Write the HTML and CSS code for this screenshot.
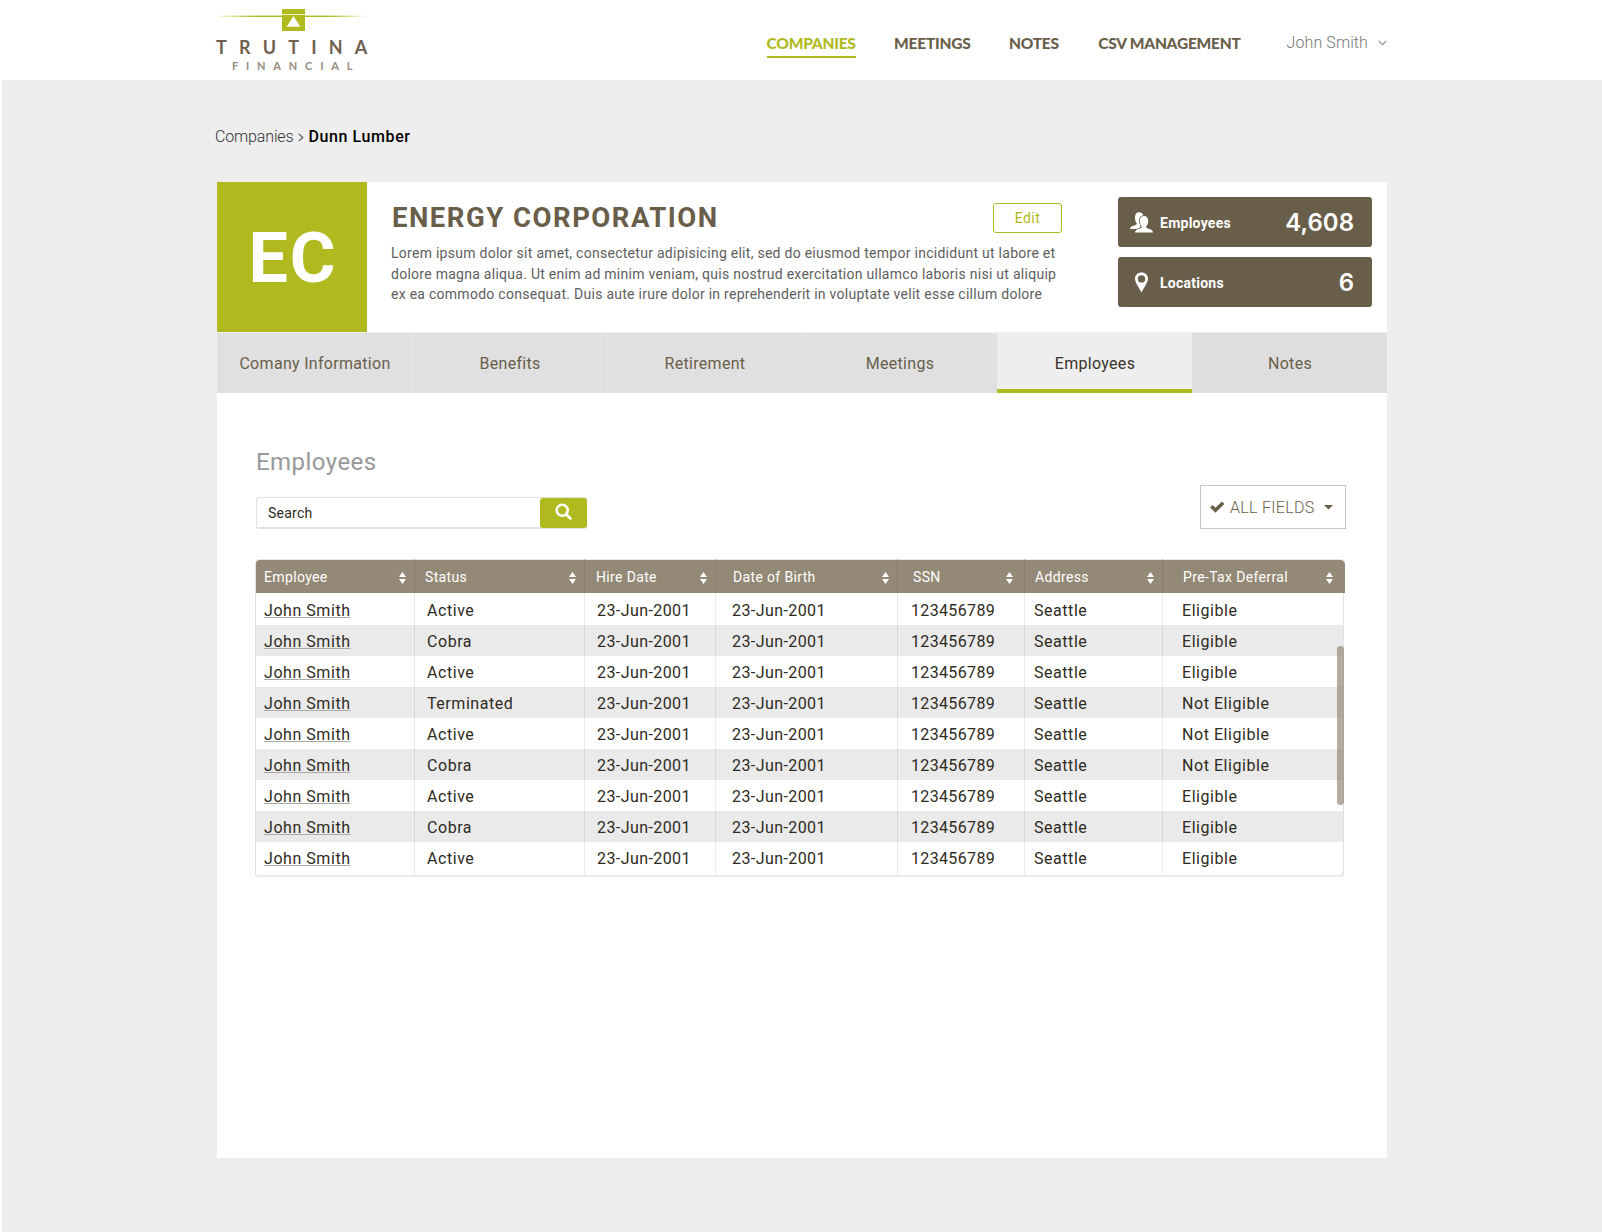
FILE: index.html
```html
<!DOCTYPE html>
<html lang="en">
<head>
<meta charset="utf-8">
<title>Energy Corporation – Employees</title>
<link rel="stylesheet" href="styles.css">
</head>
<body>
<svg class="defs" width="0" height="0">
  <symbol id="sort" viewBox="0 0 7 12"><path d="M3.5 0 7 5H0zM0 7h7L3.5 12z" fill="#fff"/></symbol>
</svg>
<header class="topbar">
  <div class="brand">
    <svg class="brand-mark" width="152" height="32" viewBox="0 0 152 32">
      <defs>
        <linearGradient id="beam" x1="0" x2="1" y1="0" y2="0">
          <stop offset="0" stop-color="#b0ba1e" stop-opacity="0.1"/>
          <stop offset="0.25" stop-color="#b0ba1e"/>
          <stop offset="0.75" stop-color="#b0ba1e"/>
          <stop offset="1" stop-color="#b0ba1e" stop-opacity="0"/>
        </linearGradient>
      </defs>
      <rect x="3" y="15.6" width="149" height="1.4" fill="url(#beam)"/>
      <rect x="67" y="9" width="23" height="22" fill="#b0ba1e"/>
      <rect x="67" y="14" width="23" height="1" fill="#fff" fill-opacity="0.75"/>
      <path d="M78.5 16 85.3 26.7H71.7z" fill="#fff"/>
    </svg>
    <div class="brand-name">TRUTINA</div>
    <div class="brand-sub">FINANCIAL</div>
  </div>
  <nav class="nav">
    <a class="nav-link is-active">COMPANIES</a>
    <a class="nav-link">MEETINGS</a>
    <a class="nav-link">NOTES</a>
    <a class="nav-link">CSV MANAGEMENT</a>
    <div class="user">John Smith
      <svg width="9" height="6" viewBox="0 0 9 6"><path d="M0.8 0.8 4.5 4.6 8.2 0.8" fill="none" stroke="#8c8c8c" stroke-width="1.1"/></svg>
    </div>
  </nav>
</header>

<main class="page">
  <div class="crumbs"><span>Companies</span><svg width="6" height="9" viewBox="0 0 6 9"><path d="M0.8 0.8 4.8 4.5 0.8 8.2" fill="none" stroke="#555" stroke-width="1.1"/></svg><b>Dunn Lumber</b></div>

  <section class="card">
    <div class="company">
      <div class="monogram">EC</div>
      <div class="about">
        <div class="about-head">
          <h1>ENERGY CORPORATION</h1>
          <button class="edit">Edit</button>
        </div>
        <p>Lorem ipsum dolor sit amet, consectetur adipisicing elit, sed do eiusmod tempor incididunt ut labore et<br>dolore magna aliqua. Ut enim ad minim veniam, quis nostrud exercitation ullamco laboris nisi ut aliquip<br>ex ea commodo consequat. Duis aute irure dolor in reprehenderit in voluptate velit esse cillum dolore</p>
      </div>
      <div class="stats">
        <div class="stat">
          <svg width="23" height="21" viewBox="0 0 23 21">
            <path d="M9 0.200c2.600 0 4.200 1.500 4.300 3.800L11 12l-1 5H0c0-2.200 1.800-2.600 4.200-3.500 1.800-.6 2.700-1 2.600-2C5.500 10.200 4.900 7.900 5 5 5.100 2 6.400.2 9 .2z" fill="#fff"/>
            <path d="M14 4c2.900 0 4.300 2 4.200 5-.1 2.400-.9 4.200-2 5.400-.1 1.200.4 1.600 2.300 2.300 2.500.8 4.300 1.400 4.500 3.800H5c.1-2.400 1.900-3 4.400-3.800 1.900-.7 2.500-1.100 2.400-2.300-1.200-1.200-2-3-2-5.400C9.700 6 11.100 4 14 4z" fill="#fff" stroke="#695e4a" stroke-width="1.600" paint-order="stroke"/>
          </svg>
          <span class="stat-label">Employees</span><span class="stat-value">4,608</span>
        </div>
        <div class="stat">
          <svg width="23" height="21" viewBox="0 0 23 21">
            <path fill-rule="evenodd" d="M11.500 0.500c3.700 0 6.500 2.700 6.500 6.300 0 3.200-2.800 7-6.500 13.700C7.800 13.800 5 10 5 6.800 5 3.200 7.800.5 11.500.5zm0 2.700a3.700 3.700 0 1 0 0 7.400 3.700 3.700 0 0 0 0-7.400z" fill="#fff"/>
          </svg>
          <span class="stat-label">Locations</span><span class="stat-value">6</span>
        </div>
      </div>
    </div>

    <div class="tabs">
      <a>Comany Information</a><a>Benefits</a><a>Retirement</a><a>Meetings</a><a class="is-active">Employees</a><a>Notes</a>
    </div>

    <div class="content">
      <h2>Employees</h2>
      <div class="tools">
        <div class="search">
          <span>Search</span>
          <button class="go"><svg width="18" height="18" viewBox="0 0 18 18"><circle cx="7.200" cy="7.200" r="5.500" fill="none" stroke="#fff" stroke-width="2.600"/><path d="M11.300 11.300 15.400 15.400" stroke="#fff" stroke-width="2.800" stroke-linecap="round"/></svg></button>
        </div>
        <div class="fields">
          <svg width="15" height="12" viewBox="0 0 15 12"><path d="M1.400 5.300 5.400 9.300 13.200 1.800" fill="none" stroke="#695e4a" stroke-width="3.400"/></svg>
          <span>ALL FIELDS</span>
          <svg width="9" height="5" viewBox="0 0 9 5"><path d="M0 0h9L4.500 4.600z" fill="#695e4a"/></svg>
        </div>
      </div>

      <div class="grid">
        <table>
          <colgroup><col class="c1"><col class="c2"><col class="c3"><col class="c4"><col class="c5"><col class="c6"><col class="c7"></colgroup>
          <thead><tr>
            <th><div>Employee<svg><use href="#sort"/></svg></div></th>
            <th><div>Status<svg><use href="#sort"/></svg></div></th>
            <th><div>Hire Date<svg><use href="#sort"/></svg></div></th>
            <th><div>Date of Birth<svg><use href="#sort"/></svg></div></th>
            <th><div>SSN<svg><use href="#sort"/></svg></div></th>
            <th><div>Address<svg><use href="#sort"/></svg></div></th>
            <th><div>Pre-Tax Deferral<svg><use href="#sort"/></svg></div></th>
          </tr></thead>
          <tbody>
            <tr><td><a>John Smith</a></td><td>Active</td><td>23-Jun-2001</td><td>23-Jun-2001</td><td>123456789</td><td>Seattle</td><td>Eligible</td></tr>
            <tr><td><a>John Smith</a></td><td>Cobra</td><td>23-Jun-2001</td><td>23-Jun-2001</td><td>123456789</td><td>Seattle</td><td>Eligible</td></tr>
            <tr><td><a>John Smith</a></td><td>Active</td><td>23-Jun-2001</td><td>23-Jun-2001</td><td>123456789</td><td>Seattle</td><td>Eligible</td></tr>
            <tr><td><a>John Smith</a></td><td>Terminated</td><td>23-Jun-2001</td><td>23-Jun-2001</td><td>123456789</td><td>Seattle</td><td>Not Eligible</td></tr>
            <tr><td><a>John Smith</a></td><td>Active</td><td>23-Jun-2001</td><td>23-Jun-2001</td><td>123456789</td><td>Seattle</td><td>Not Eligible</td></tr>
            <tr><td><a>John Smith</a></td><td>Cobra</td><td>23-Jun-2001</td><td>23-Jun-2001</td><td>123456789</td><td>Seattle</td><td>Not Eligible</td></tr>
            <tr><td><a>John Smith</a></td><td>Active</td><td>23-Jun-2001</td><td>23-Jun-2001</td><td>123456789</td><td>Seattle</td><td>Eligible</td></tr>
            <tr><td><a>John Smith</a></td><td>Cobra</td><td>23-Jun-2001</td><td>23-Jun-2001</td><td>123456789</td><td>Seattle</td><td>Eligible</td></tr>
            <tr><td><a>John Smith</a></td><td>Active</td><td>23-Jun-2001</td><td>23-Jun-2001</td><td>123456789</td><td>Seattle</td><td>Eligible</td></tr>
          </tbody>
        </table>
        <div class="scroll-thumb"></div>
      </div>
    </div>
  </section>
</main>
</body>
</html>
```
FILE: styles.css
```css
* { box-sizing: border-box; }
body {
  margin: 0;
  min-height: 1232px;
  border-left: 2px solid #fff;
  background: #eee;
  font-family: Roboto, "Liberation Sans", sans-serif;
  font-size: 16px;
  color: #2e2b22;
}
svg { display: block; flex: none; }
.defs { position: absolute; }
button { font-family: inherit; padding: 0; margin: 0; }

/* Top bar */
.topbar {
  display: flex;
  justify-content: space-between;
  height: 80px;
  padding: 0 215px 0 213px;
  background: #fff;
}
.brand { width: 165px; font-family: Lato, sans-serif; white-space: nowrap; }
.brand-name {
  height: 27px;
  padding: 5px 0 0 1px;
  font-size: 18px;
  font-weight: 700;
  line-height: 21px;
  letter-spacing: 12.2px;
  color: #6f6250;
}
.brand-sub {
  padding-left: 17px;
  font-size: 11px;
  font-weight: 700;
  line-height: 14px;
  letter-spacing: 7.8px;
  color: #978c7f;
}
.nav { display: flex; align-items: flex-start; padding-top: 33px; }
.nav-link {
  height: 25px;
  margin-right: 38.5px;
  font: 900 15.5px/21px Lato, sans-serif;
  letter-spacing: -0.25px;
  color: #695e4a;
}
.nav-link:nth-child(3) { margin-right: 39.5px; }
.nav-link:nth-child(4) { margin-right: 46px; }
.nav-link.is-active { color: #b0ba1e; border-bottom: 2px solid #b0ba1e; }
.user {
  display: flex;
  align-items: center;
  gap: 10px;
  line-height: 19px;
  font-weight: 300;
  letter-spacing: 0.1px;
  color: #777;
}

/* Page */
.page { width: 1170px; margin-left: 215px; }
.crumbs {
  display: flex;
  align-items: center;
  gap: 7px;
  height: 102px;
  margin-left: -2px;
  padding-top: 11px;
  font-weight: 300;
  letter-spacing: -0.15px;
  color: #333;
}
.crumbs b { font-weight: 500; letter-spacing: 0.6px; color: #000; margin-left: -3px; }
.crumbs svg { margin: 1px 0 0 -2px; }
.card { height: 976px; background: #fff; }

/* Company summary */
.company { display: flex; height: 150px; }
.monogram {
  width: 150px;
  padding-left: 2px;
  background: #b0ba1e;
  font-size: 70px;
  font-weight: 700;
  line-height: 152px;
  letter-spacing: 2px;
  text-align: center;
  color: #fff;
}
.about { width: 671px; margin-left: 24px; padding-top: 21px; }
.about-head { display: flex; justify-content: space-between; height: 36px; }
h1 {
  margin: 0 0 0 1px;
  font-size: 27.5px;
  font-weight: 700;
  line-height: 29px;
  letter-spacing: 1.5px;
  color: #695e4a;
}
.edit {
  width: 69px;
  height: 30px;
  border: 1px solid #b0ba1e;
  border-radius: 3px;
  background: #fff;
  font-size: 14px;
  letter-spacing: 0.5px;
  color: #b0ba1e;
}
.about p {
  margin: 4px 0 0;
  font-size: 14px;
  line-height: 20.5px;
  letter-spacing: 0.27px;
  white-space: nowrap;
  color: #5e5e5e;
}
.stats { display: flex; flex-direction: column; gap: 10px; margin: 15px 15px 0 auto; }
.stat {
  display: flex;
  align-items: center;
  width: 254px;
  height: 50px;
  padding: 0 18px 0 12px;
  border-radius: 3px;
  background: #695e4a;
  color: #fff;
}
.stat-label { margin: 1px 0 0 7px; font-size: 14px; font-weight: 700; letter-spacing: 0.25px; }
.stat-value { margin: 2px 0 0 auto; font: 600 24px/28px Inter, sans-serif; }

/* Tabs */
.tabs { display: flex; height: 61px; border-top: 1px solid #eee; }
.tabs a {
  flex: 1;
  border-left: 1px solid #e5e5e5;
  background: #e0e0e0;
  line-height: 61px;
  letter-spacing: 0.3px;
  text-align: center;
  color: #695e4a;
}
.tabs a:first-child { border-left-color: #e0e0e0; }
.tabs a.is-active {
  border-left: 0;
  padding-left: 1px;
  background: #eee;
  box-shadow: inset 0 -4px #b0ba1e;
  color: #38342a;
}
.tabs a:last-child { background: #dedede; border-color: #dedede; }

/* Employees */
.content { padding: 53px 41px 0 38px; }
h2 {
  margin: 0 0 0 1px;
  font-size: 24px;
  font-weight: 400;
  line-height: 33px;
  letter-spacing: 0.45px;
  color: #999;
}
.tools { display: flex; justify-content: space-between; margin-top: 6px; }
.search {
  display: flex;
  justify-content: space-between;
  width: 331px;
  height: 32px;
  margin: 12px 0 0 1px;
  border: 1px solid #e2e2e2;
  border-bottom-width: 2px;
  border-radius: 3px;
  font-size: 14px;
  line-height: 31px;
  letter-spacing: 0.25px;
}
.search span { padding-left: 11px; }
.go {
  display: flex;
  justify-content: center;
  width: 47px;
  height: 30px;
  margin-right: -1px;
  padding: 5px 0 0 1px;
  border: 0;
  border-radius: 3px;
  background: #b0ba1e;
}
.fields {
  display: flex;
  align-items: center;
  width: 146px;
  height: 44px;
  padding: 0 12px 0 9px;
  border: 1px solid #c8c8c8;
  font-weight: 300;
  letter-spacing: 0.3px;
  color: #695e4a;
}
.fields span { margin: 1px auto 0 5px; }

/* Table */
.grid { position: relative; width: 1090px; margin-top: 30px; }
table {
  width: 1090px;
  table-layout: fixed;
  border-spacing: 0;
}
.c1 { width: 159px; } .c2 { width: 170px; } .c3 { width: 131px; } .c4 { width: 182px; }
.c5 { width: 127px; } .c6 { width: 138px; } .c7 { width: 183px; }
th {
  height: 34px;
  padding: 0 8px 0 10px;
  border-top: 1px solid #e9e7e4;
  border-left: 1px solid #877c69;
  background: #948976;
  font-size: 14px;
  font-weight: 400;
  letter-spacing: 0.35px;
  text-align: left;
  color: #fff;
}
th div { display: flex; align-items: center; justify-content: space-between; line-height: 32px; }
th svg { width: 7px; height: 12px; margin-top: 2px; }
th:first-child { border-left-color: #e2e2e2; padding-left: 8px; border-top-left-radius: 5px; }
th:nth-child(3) { padding-left: 11px; }
th:nth-child(4) { padding-left: 17px; }
th:nth-child(5) { padding-left: 15px; padding-right: 11px; }
th:nth-child(7) { padding: 0 12px 0 20px; border-top-right-radius: 5px; }
td {
  height: 31px;
  padding: 2px 0 0 12px;
  border-left: 1px solid rgba(0, 0, 0, 0.08);
  line-height: 29px;
  letter-spacing: 0.55px;
  white-space: nowrap;
}
tbody tr:first-child td { height: 32px; padding-top: 3px; }
tbody tr:last-child td { height: 35px; padding-bottom: 2px; border-bottom: 2px solid #ebebeb; }
tbody tr:last-child td:first-child { border-bottom-left-radius: 4px; }
tbody tr:last-child td:last-child { border-bottom-right-radius: 4px; }
tbody tr:nth-child(even) td { background: #eaeaea; }
td:first-child { padding-left: 8px; border-left-color: #dedede; }
td:nth-child(3), td:nth-child(4) { letter-spacing: 0.42px; }
td:nth-child(4) { padding-left: 16px; }
td:nth-child(5) { padding-left: 13px; letter-spacing: 0.35px; }
td:nth-child(6) { padding-left: 9px; }
td:nth-child(7) { padding-left: 19px; }
tbody { clip-path: inset(0 1px 0 0); }
td:last-child { box-shadow: inset -2px 0 #e0e0e0; }
td a {
  text-decoration: underline 1px #aaa;
  text-underline-offset: 1px;
  text-decoration-skip-ink: none;
}
.scroll-thumb {
  position: absolute;
  top: 87px;
  right: 1px;
  width: 7px;
  height: 159px;
  border-radius: 4px;
  background: rgba(148, 137, 118, 0.7);
}
```
